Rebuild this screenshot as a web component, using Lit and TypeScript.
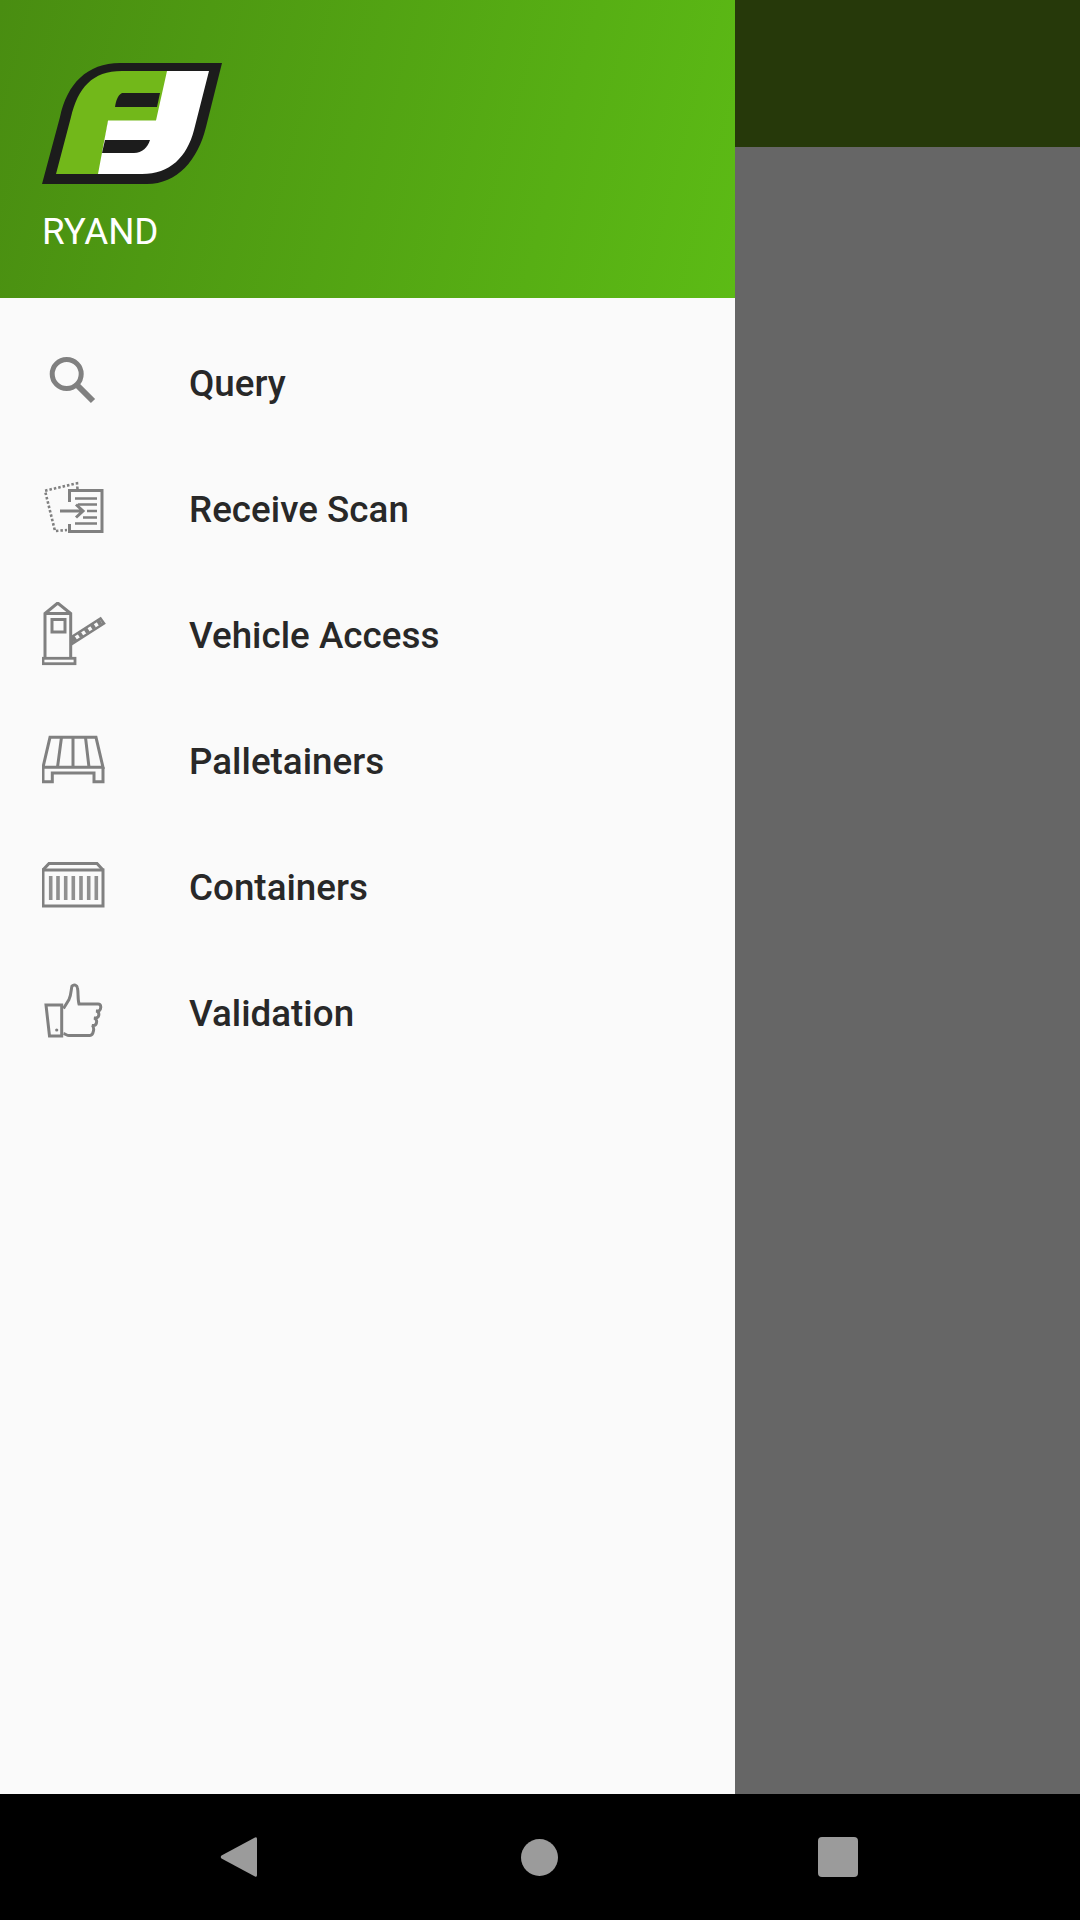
import {LitElement, css, html, svg} from "lit";
import {customElement} from "lit/decorators.js";

const icons = {
  search: svg`<circle cx="24.7" cy="24" r="14.5" stroke-width="5"/><path d="M35 35 L51 51" stroke-width="6"/>`,
  receive: svg`<path d="M27.5 26V14.5H60V55.5H27.5V48" stroke-width="3"/>
    <path d="M33 22.5H55M36 28.500H55M45 35H55M41 41.500H55M33 47.500H55" stroke-width="2.600"/>
    <path d="M18 35H41M34 28.500L41 35L34 41.500" stroke-width="3"/>
    <path d="M35.500 13L35 7.300L3 14.700L13 55L25 54" stroke-width="2.600" stroke-dasharray="2.500 2"/>`,
  gate: svg`<path d="M3 56V11.500L15.700 1L28.700 11.500V56M3 11.500H28.700" stroke-width="3"/>
    <rect x="1" y="56.300" width="32" height="5.400" stroke-width="2.800"/>
    <rect x="10" y="17.500" width="13" height="12.500" stroke-width="3"/>
    <path d="M29.500 35L58.500 16.500L62 21.500L30.500 41.500Z" stroke-width="2.600"/>
    <path d="M30.500 38L60 19" stroke-width="4.500" stroke-dasharray="4 3.500"/>`,
  pallet: svg`<path d="M1 39.300L8 9.300H54L61 39.300Z" stroke-width="3"/>
    <path d="M19.500 9.300L15.500 39.300M31 9.300V39.300M43.500 9.300L47 39.300" stroke-width="3"/>
    <path d="M1 39.300V53.700H10.300V45H52V53.700H61V39.300" stroke-width="3"/>`,
  container: svg`<path d="M1 16V52H61V16Z" stroke-width="3"/>
    <path d="M1 16L7 9.500H55L61 16" stroke-width="3"/>
    <path d="M8.700 22V46M16 22V46M23.700 22V46M31.300 22V46M39 22V46M46.700 22V46M54.300 22V46" stroke-width="3.600" stroke="#909090"/>`,
  thumb: svg`<path d="M4 25H19.700V56H7.500Z" stroke-width="3"/>
    <circle cx="14.700" cy="50" r="1.600" fill="#808080" stroke="none"/>
    <path d="M21.500 28.500L27 19.500C29.500 14 29 9 30 6C32 4 35 5 35.500 8C36.500 13 35.500 19 37 24H56C59.500 24 59.500 29 57 31H54C58 31.500 57.500 37 54.500 38H52C56 39 55 45 52 45.500H50C53 47 51.500 55.500 48 55.500H27C25 55.500 23.500 54 21.500 53.500" stroke-width="3"/>`,
};

const items: [string, keyof typeof icons][] = [
  ["Query", "search"],
  ["Receive Scan", "receive"],
  ["Vehicle Access", "gate"],
  ["Palletainers", "pallet"],
  ["Containers", "container"],
  ["Validation", "thumb"],
];

@customElement("app-root")
export class AppRoot extends LitElement {
  static styles = css`
    :host {
      display: flex;
      flex-direction: column;
      width: 1080px;
      height: 1920px;
      font-family: Roboto, sans-serif;
      background: #000;
    }

    .main {
      display: flex;
      height: 1794px;
    }

    .drawer {
      width: 735px;
      background: #fafafa;
    }

    .head {
      box-sizing: border-box;
      height: 298px;
      padding: 62px 0 0 42px;
      background: linear-gradient(105deg, #498d11, #5cbb15);
    }

    .logo {
      display: block;
      width: 182px;
      height: 124px;
      filter: blur(0.4px);
    }

    .name {
      margin-top: 24px;
      font-size: 36.75px;
      line-height: 44px;
      color: #fff;
    }

    .list {
      padding-top: 21px;
    }

    .row {
      display: flex;
      align-items: center;
      height: 126px;
      padding-left: 42px;
    }

    .icon {
      width: 64px;
      height: 64px;
      margin-right: 83px;
      fill: none;
      stroke: #808080;
      filter: blur(0.6px);
    }

    .label {
      padding-top: 2px;
      font-size: 36.75px;
      font-weight: 500;
      letter-spacing: 0.025px;
      color: #282828;
    }

    .scrim {
      flex: 1;
      background: #666;
    }

    .bar {
      height: 147px;
      background: #26390a;
    }

    .nav {
      display: flex;
      align-items: center;
      height: 126px;
      padding-left: 220px;
    }

    .nav svg {
      display: block;
      fill: #9b9b9b;
    }

    .home {
      margin: 0 260px 0 264px;
    }
  `;

  render() {
    return html`
      <div class="main">
        <div class="drawer">
          <div class="head">
            <svg class="logo" viewBox="0 0 182 124">
              <path d="M0 122L18 55C25 22 45 1 78 1H180L164 65C156 98 135 122 105 122Z" fill="#1c1c1c"/>
              <path d="M14 112L29 55C36 26 50 9 80 9H126L115 60H66L57 112Z" fill="#72b81a"/>
              <path d="M125 9H167L152 68C145 95 128 112 100 112H56L66 58.500H114Z" fill="#fff"/>
              <path d="M80 31H118L115 45H73C74 38 76 33 80 31Z" fill="#1c1c1c"/>
              <path d="M63 78H108C106 85 100 91 92 91H60Z" fill="#1c1c1c"/>
            </svg>
            <div class="name">RYAND</div>
          </div>
          <div class="list">
            ${items.map(
              ([label, icon]) => html`
                <div class="row">
                  <svg class="icon" viewBox="0 0 64 64">${icons[icon]}</svg>
                  <span class="label">${label}</span>
                </div>
              `
            )}
          </div>
        </div>
        <div class="scrim"><div class="bar"></div></div>
      </div>
      <div class="nav">
        <svg width="37" height="42" viewBox="0 0 37 42">
          <path d="M35 1.500L1.500 19.500Q0 21 1.500 22.500L35 40.500Q37 41.500 37 39V3Q37 0.500 35 1.500Z"/>
        </svg>
        <svg class="home" width="37" height="37" viewBox="0 0 37 37"><circle cx="18.500" cy="18.500" r="18.500"/></svg>
        <svg width="40" height="40" viewBox="0 0 40 40"><rect width="40" height="40" rx="4"/></svg>
      </div>
    `;
  }
}
